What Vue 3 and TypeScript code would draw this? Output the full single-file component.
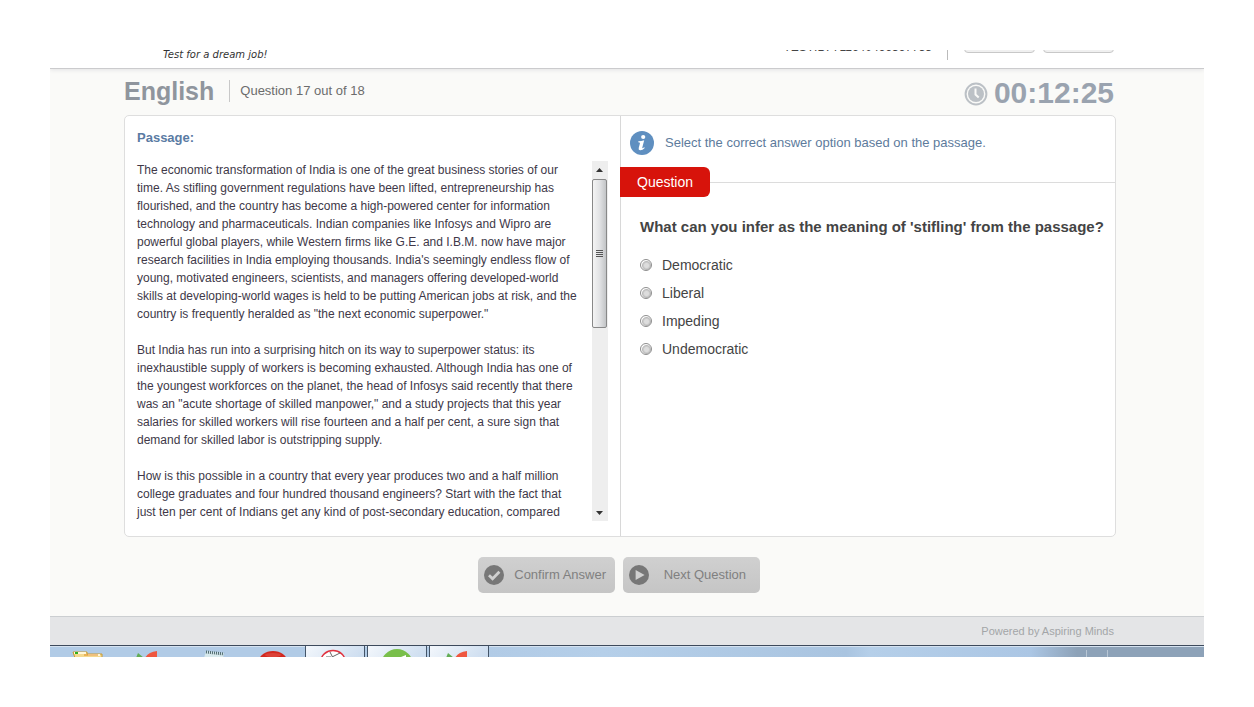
<script setup lang="ts">
import { ref } from 'vue'

const passage: string[][] = [
  [
    'The economic transformation of India is one of the great business stories of our',
    'time. As stifling government regulations have been lifted, entrepreneurship has',
    'flourished, and the country has become a high-powered center for information',
    'technology and pharmaceuticals. Indian companies like Infosys and Wipro are',
    'powerful global players, while Western firms like G.E. and I.B.M. now have major',
    "research facilities in India employing thousands. India's seemingly endless flow of",
    'young, motivated engineers, scientists, and managers offering developed-world',
    'skills at developing-world wages is held to be putting American jobs at risk, and the',
    'country is frequently heralded as "the next economic superpower."',
  ],
  [
    'But India has run into a surprising hitch on its way to superpower status: its',
    'inexhaustible supply of workers is becoming exhausted. Although India has one of',
    'the youngest workforces on the planet, the head of Infosys said recently that there',
    'was an "acute shortage of skilled manpower," and a study projects that this year',
    'salaries for skilled workers will rise fourteen and a half per cent, a sure sign that',
    'demand for skilled labor is outstripping supply.',
  ],
  [
    'How is this possible in a country that every year produces two and a half million',
    'college graduates and four hundred thousand engineers? Start with the fact that',
    'just ten per cent of Indians get any kind of post-secondary education, compared',
  ],
]

const options: string[] = ['Democratic', 'Liberal', 'Impeding', 'Undemocratic']
const answer = ref<string>('')
</script>

<template>
  <div class="screen">
    <header class="masthead">
      <p class="tagline">Test for a dream job!</p>
      <div class="account">
        <span class="test-id">TESTID: 711640466367755</span>
        <span class="account-rule"></span>
        <button class="stub" type="button" aria-label="Help"></button>
        <button class="stub" type="button" aria-label="Exit"></button>
      </div>
    </header>

    <main class="body">
      <div class="status">
        <h1>English</h1>
        <span class="progress">Question 17 out of 18</span>
        <div class="timer">
          <svg width="24" height="24" viewBox="0 0 24 24" aria-hidden="true">
            <circle cx="12" cy="12" r="10.4" fill="none" stroke="#bcc1c6" stroke-width="2" />
            <circle cx="12" cy="12" r="8" fill="#bcc1c6" />
            <path d="M11.5 6.5v6l3.2 3" fill="none" stroke="#fafaf8" stroke-width="2" />
          </svg>
          <span>00:12:25</span>
        </div>
      </div>

      <div class="panel">
        <section class="passage">
          <h2>Passage:</h2>
          <div class="reader">
            <div class="text">
              <p v-for="(para, i) in passage" :key="i">
                <span v-for="line in para" :key="line" class="line">{{ line }}</span>
              </p>
            </div>
            <div class="scroll" aria-hidden="true">
              <svg class="arrow" width="15" height="18" viewBox="0 0 15 18"><path d="M4 11l3.5-4 3.5 4z" fill="#333" /></svg>
              <div class="thumb"><i></i><i></i><i></i><i></i></div>
              <div class="track"></div>
              <svg class="arrow" width="15" height="18" viewBox="0 0 15 18"><path d="M4 8h7l-3.5 4z" fill="#333" /></svg>
            </div>
          </div>
        </section>

        <section class="question">
          <div class="hint">
            <svg width="24" height="24" viewBox="0 0 24 24" aria-hidden="true">
              <circle cx="12" cy="12" r="12" fill="#5f8fc0" />
              <circle cx="13.2" cy="6" r="2.1" fill="#fff" />
              <path d="M8.4 10.2q3-.2 5.8-1l-1.9 7.2q-.2 1 .6.7l1.5-.9.3.8q-2.3 2.5-4.6 2.3-1.9-.3-1.4-2.4l1.2-4.4q.2-1-.5-1.1l-1.2-.2z" fill="#fff" />
            </svg>
            <span>Select the correct answer option based on the passage.</span>
          </div>
          <div class="divider"><span class="tab">Question</span></div>
          <fieldset>
            <legend>What can you infer as the meaning of 'stifling' from the passage?</legend>
            <label v-for="option in options" :key="option">
              <input v-model="answer" type="radio" name="answer" :value="option" />
              <span>{{ option }}</span>
            </label>
          </fieldset>
        </section>
      </div>

      <div class="actions">
        <button class="action" type="button">
          <svg width="20" height="20" viewBox="0 0 20 20" aria-hidden="true">
            <circle cx="10" cy="10" r="10" fill="#777" />
            <path d="M5 10.2l3.6 3.6 6.8-7" fill="none" stroke="#d0d0d0" stroke-width="2.8" />
          </svg>
          <span>Confirm Answer</span>
        </button>
        <button class="action" type="button">
          <svg width="20" height="20" viewBox="0 0 20 20" aria-hidden="true">
            <circle cx="10" cy="10" r="10" fill="#777" />
            <path d="M6.6 5l9 5-9 5z" fill="#d0d0d0" />
          </svg>
          <span>Next Question</span>
        </button>
      </div>
    </main>

    <footer class="credit">Powered by Aspiring Minds</footer>

    <nav class="taskbar" aria-label="Taskbar">
      <div class="pinned">
        <div class="task">
          <svg width="48" height="11" viewBox="0 0 48 11" aria-hidden="true">
            <path d="M9 6h14v2h15v4H11z" fill="#f4d98e" stroke="#c79a35" />
            <path d="M10 6h12v2H10zM24 8h12v2H24z" fill="#fff6d8" />
            <path d="M11 6h3v2h-3z" fill="#30b020" />
            <path d="M20 9h14" stroke="#e08a20" />
          </svg>
        </div>
        <div class="task">
          <svg width="48" height="11" viewBox="0 0 48 11" aria-hidden="true">
            <path d="M12 7l6 5h-8z" fill="#62ad55" />
            <path d="M31 5v7H19Q22 6 31 5z" fill="#ef5740" />
          </svg>
        </div>
        <div class="task">
          <svg width="48" height="11" viewBox="0 0 48 11" aria-hidden="true">
            <path d="M18 5l18 2-1 5H16z" fill="#d7e9ed" />
            <path d="M18 6l18 2" stroke="#4c676c" stroke-width="3" stroke-dasharray="1 1" />
          </svg>
        </div>
        <div class="task">
          <svg width="48" height="11" viewBox="0 0 48 11" aria-hidden="true">
            <ellipse cx="23" cy="15" rx="14" ry="10" fill="#d2281f" />
            <ellipse cx="23" cy="9" rx="8" ry="2" fill="#dc4238" />
          </svg>
        </div>
      </div>
      <div class="task open">
        <svg width="58" height="11" viewBox="0 0 58 11" aria-hidden="true">
          <ellipse cx="27" cy="15" rx="12" ry="10.5" fill="#fff" stroke="#e0323f" stroke-width="1.5" />
          <path d="M24 6l3 6M34 7l-8 4M20 11h5" stroke="#666" />
        </svg>
      </div>
      <div class="task open">
        <svg width="58" height="11" viewBox="0 0 58 11" aria-hidden="true">
          <circle cx="29" cy="19" r="16" fill="#79bf4b" />
          <path d="M33 11l5-2v3z" fill="#fff" />
        </svg>
      </div>
      <div class="task open">
        <svg width="58" height="11" viewBox="0 0 58 11" aria-hidden="true">
          <path d="M18 7l6 5h-8z" fill="#62ad55" />
          <path d="M37 5v7H25Q28 6 37 5z" fill="#ef5740" />
        </svg>
      </div>
      <div class="tray"></div>
    </nav>
  </div>
</template>

<style>
body {
  margin: 0;
  background: #fff;
}
</style>

<style scoped>
.screen {
  margin: 50px;
  background: #fafaf8;
  font-family: "Liberation Sans", Arial, sans-serif;
  color: #444;
  overflow: hidden;
}
.masthead {
  display: flex;
  justify-content: space-between;
  align-items: flex-start;
  height: 18px;
  padding: 0 90px 0 113px;
  background: #fff;
  border-bottom: 1px solid #cbcbcd;
  box-shadow: 0 1px 4px #e2e2e4;
  overflow: hidden;
}
.tagline {
  margin: 0;
  font: italic 10px/10px "DejaVu Sans", sans-serif;
  color: #333;
}
.account {
  display: flex;
  align-items: flex-end;
  height: 10px;
}
.test-id {
  align-self: flex-start;
  margin-top: -10px;
  font-size: 12px;
  line-height: 14px;
  white-space: nowrap;
}
.account-rule {
  width: 1px;
  height: 10px;
  margin: 0 16px 0 15px;
  background: #bbb;
}
.stub {
  align-self: flex-start;
  box-sizing: border-box;
  width: 71px;
  height: 24px;
  margin-top: -21px;
  padding: 0;
  border: 1px solid #c8c8c8;
  border-radius: 4px;
  background: #f0f0f0;
}
.stub + .stub {
  margin-left: 8px;
}
.body {
  padding: 0 88px 23px 74px;
}
.status {
  display: flex;
  align-items: center;
  height: 46px;
}
h1 {
  margin: 0;
  font-size: 25px;
  line-height: 30px;
  color: #8f959d;
}
.progress {
  margin-left: 15px;
  padding-left: 10px;
  border-left: 1px solid #c8c8c8;
  font-size: 13px;
  line-height: 22px;
  color: #6c6c6c;
}
.status h1,
.progress {
  margin-bottom: 3px;
}
.timer {
  display: flex;
  align-items: center;
  gap: 6px;
  margin-left: auto;
  padding: 1px 2px 0 0;
  font-size: 30px;
  line-height: 34px;
  font-weight: bold;
  color: #9aa3af;
}
.timer svg {
  margin-top: 3px;
}
.panel {
  display: grid;
  grid-template-columns: minmax(0, 1fr) minmax(0, 1fr);
  background: #fff;
  border: 1px solid #dedede;
  border-radius: 5px;
}
.passage {
  padding: 13px 12px 15px;
}
.question {
  border-left: 1px solid #d8d8d8;
}
h2 {
  margin: 0 0 15px;
  font-size: 13px;
  line-height: 17px;
  color: #5a7ba3;
}
.reader {
  display: flex;
  height: 360px;
}
.text {
  flex: 1;
  min-width: 0;
  font-size: 12px;
  line-height: 18px;
  color: #403848;
  white-space: nowrap;
}
.text p {
  margin: 0 0 18px;
}
.line {
  display: block;
}
.scroll {
  display: flex;
  flex-direction: column;
  flex: none;
  width: 16px;
  background: #eee;
}
.arrow {
  flex: none;
}
.thumb {
  display: flex;
  flex-direction: column;
  align-items: center;
  justify-content: center;
  gap: 1px;
  box-sizing: border-box;
  width: 15px;
  height: 149px;
  border: 1px solid #888;
  border-radius: 2px;
  background: linear-gradient(90deg, #f4f4f4, #e2e3e5 50%, #c2c4c6);
}
.thumb i {
  width: 7px;
  height: 1px;
  background: #555;
}
.track {
  flex: 1;
}
.hint {
  display: flex;
  align-items: center;
  gap: 11px;
  padding: 15px 9px 12px;
  font-size: 13px;
  line-height: 24px;
  color: #5d7b9c;
}
.divider {
  display: flex;
  align-items: center;
}
.divider::after {
  content: "";
  flex: 1;
  height: 1px;
  background: #dcdcdc;
}
.tab {
  margin-left: -1px;
  padding: 0 17px;
  border-radius: 0 6px 6px 0;
  background: #d7130b;
  font-size: 14px;
  line-height: 30px;
  color: #fff;
}
fieldset {
  min-width: 0;
  margin: 0;
  padding: 20px 0 20px 19px;
  border: 0;
}
legend {
  float: left;
  width: 100%;
  padding: 0;
  margin-bottom: 14px;
  font-size: 15px;
  line-height: 20px;
  font-weight: bold;
}
label {
  display: flex;
  clear: both;
  align-items: center;
  gap: 10px;
  font-size: 14px;
  line-height: 28px;
}
input {
  appearance: none;
  box-sizing: border-box;
  width: 12px;
  height: 12px;
  margin: 0;
  border: 1px solid #8e8e8e;
  border-radius: 50%;
  background: radial-gradient(circle at 55% 55%, #ddd 0 2px, #bbb 4px, #fff 5px);
}
input:checked {
  background: radial-gradient(circle, #333 0 3px, #eee 4px);
}
.actions {
  display: flex;
  justify-content: center;
  gap: 8px;
  margin-top: 20px;
  padding-right: 2px;
}
.action {
  display: flex;
  align-items: center;
  width: 137px;
  height: 36px;
  padding: 0 6px;
  border: 0;
  border-radius: 5px;
  background: linear-gradient(#d0d0d0, #c5c5c5);
  font: 13px/20px "Liberation Sans", Arial, sans-serif;
  color: #808080;
  white-space: nowrap;
}
.action span {
  flex: 1;
  padding-right: 3px;
  text-align: right;
}
.action + .action span {
  padding-right: 8px;
}
.credit {
  padding: 0 90px 0 0;
  border-top: 1px solid #cbced1;
  background: #e4e5e7;
  font-size: 11px;
  line-height: 28px;
  text-align: right;
  color: #a3a5a8;
}
.taskbar {
  display: flex;
  height: 11px;
  border-top: 1px solid #3d4a5c;
  background: linear-gradient(90deg, #b1cbe6 0 38%, #b5cfe9 48%, #a9c4e0 69%, #b5cfe9 71%, #abc6e4 85%, #8da2b8 89%);
  box-shadow: inset 0 1px #d5e2f0;
  overflow: hidden;
}
.pinned {
  display: flex;
  padding-right: 7px;
}
.task {
  box-sizing: border-box;
  width: 62px;
  padding-left: 14px;
}
.task svg {
  display: block;
}
.task.open {
  width: 60px;
  margin-right: 2px;
  padding-left: 0;
  border: 1px solid #435468;
  border-top: 0;
  border-bottom: 0;
  background: linear-gradient(135deg, #f3f7fc, #cbdcef);
}
.tray {
  width: 20px;
  margin: 4px 96px 0 auto;
  border: 1px solid #b8c6d4;
  border-top: 0;
  border-bottom: 0;
}
</style>
